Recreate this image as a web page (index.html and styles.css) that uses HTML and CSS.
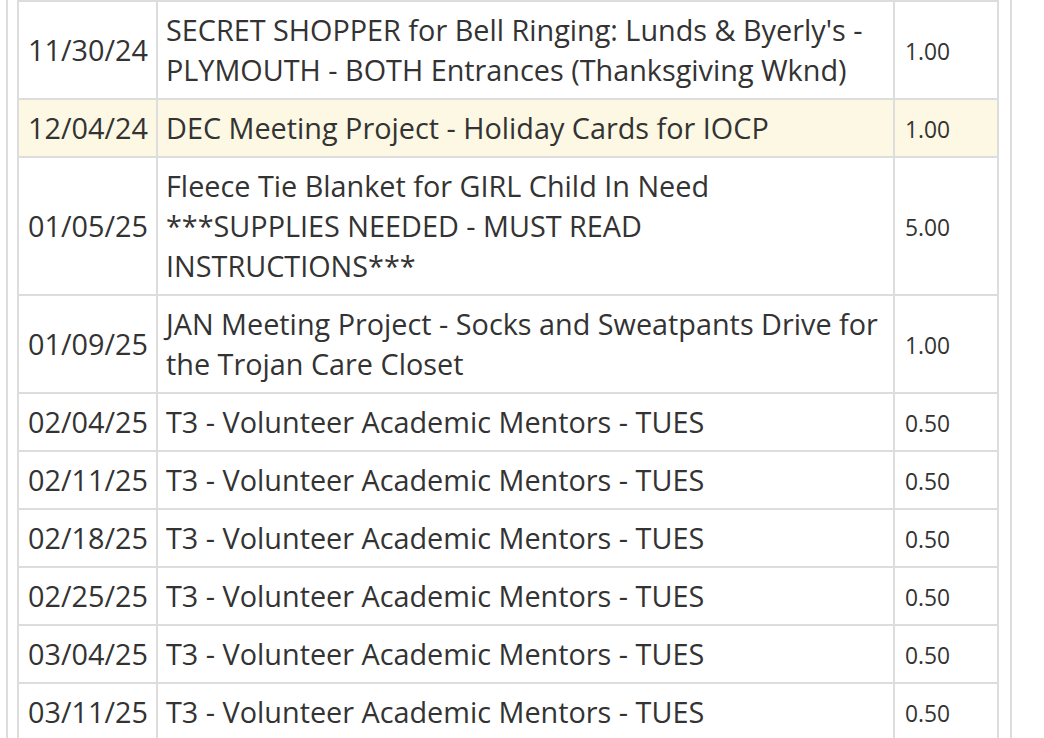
FILE: index.html
```html
<!DOCTYPE html>
<html>
<head>
<meta charset="utf-8">
<link rel="stylesheet" href="styles.css">
</head>
<body>
<div class="frame">
  <table class="hours">
    <colgroup>
      <col class="c-date">
      <col class="c-desc">
      <col class="c-amt">
    </colgroup>
    <tbody>
      <tr><td class="date">11/30/24</td><td class="desc">SECRET SHOPPER for Bell Ringing: Lunds &amp; Byerly's - PLYMOUTH - BOTH Entrances (Thanksgiving Wknd)</td><td class="amt">1.00</td></tr>
      <tr class="warning"><td class="date">12/04/24</td><td class="desc">DEC Meeting Project - Holiday Cards for IOCP</td><td class="amt">1.00</td></tr>
      <tr><td class="date">01/05/25</td><td class="desc">Fleece Tie Blanket for GIRL Child In Need ***SUPPLIES NEEDED - MUST READ INSTRUCTIONS***</td><td class="amt">5.00</td></tr>
      <tr><td class="date">01/09/25</td><td class="desc">JAN Meeting Project - Socks and Sweatpants Drive for the Trojan Care Closet</td><td class="amt">1.00</td></tr>
      <tr><td class="date">02/04/25</td><td class="desc">T3 - Volunteer Academic Mentors - TUES</td><td class="amt">0.50</td></tr>
      <tr><td class="date">02/11/25</td><td class="desc">T3 - Volunteer Academic Mentors - TUES</td><td class="amt">0.50</td></tr>
      <tr><td class="date">02/18/25</td><td class="desc">T3 - Volunteer Academic Mentors - TUES</td><td class="amt">0.50</td></tr>
      <tr><td class="date">02/25/25</td><td class="desc">T3 - Volunteer Academic Mentors - TUES</td><td class="amt">0.50</td></tr>
      <tr><td class="date">03/04/25</td><td class="desc">T3 - Volunteer Academic Mentors - TUES</td><td class="amt">0.50</td></tr>
      <tr><td class="date">03/11/25</td><td class="desc">T3 - Volunteer Academic Mentors - TUES</td><td class="amt">0.50</td></tr>
    </tbody>
  </table>
</div>
</body>
</html>
```

FILE: styles.css
```css
html, body {
  margin: 0;
  padding: 0;
  background: #ffffff;
}

body {
  font-family: "Open Sans", "Noto Sans", sans-serif;
  color: #333333;
  height: 738px;
  overflow: hidden;
}

.frame {
  margin-left: 6px;
  width: 982px;
  min-height: 760px;
  border-left: 2px solid #dddddd;
  border-right: 2px solid #dddddd;
  padding: 0 11px 0 9px;
  box-sizing: content-box;
}

.hours {
  border-collapse: separate;
  border-spacing: 0;
  table-layout: fixed;
  width: 982px;
  border-left: 2px solid #dddddd;
  border-top: 2px solid #dddddd;
}

.c-date { width: 139px; }
.c-desc { width: 737px; }
.c-amt { width: 104px; }

.hours td {
  border-right: 2px solid #dddddd;
  border-bottom: 2px solid #dddddd;
  padding: 8px 6px 8px 9px;
  vertical-align: middle;
  font-size: 28.8px;
  line-height: 40px;
}

.hours td.desc {
  padding-left: 8px;
  padding-right: 6px;
}

.hours td.amt {
  font-size: 22.8px;
  padding: 10px 6px 6px 10px;
}

.hours tr.warning td {
  background: #fcf8e3;
}
```
